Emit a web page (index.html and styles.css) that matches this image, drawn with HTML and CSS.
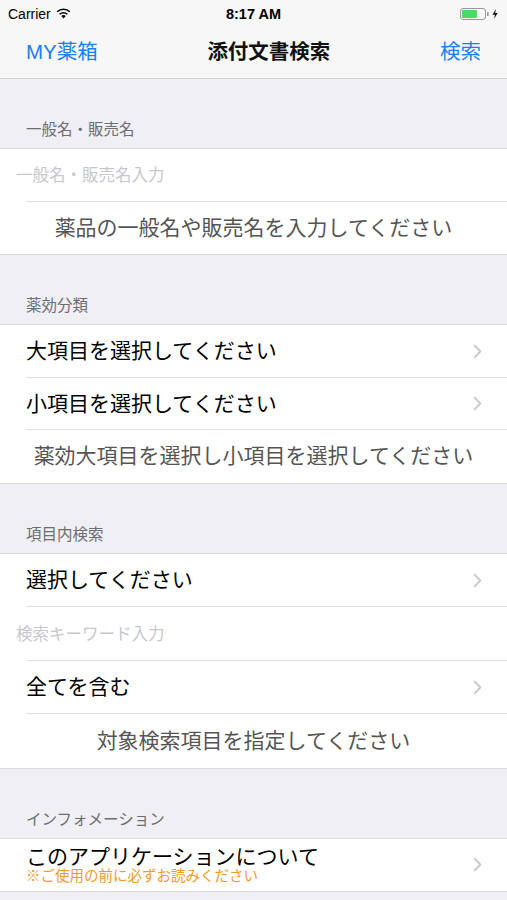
FILE: index.html
```html
<!DOCTYPE html>
<html lang="ja">
<head>
  <meta charset="UTF-8">
  <title>添付文書検索</title>
  <link rel="stylesheet" href="styles.css">
</head>
<body>

<div class="statusbar">
  <div class="status-left">
    <span>Carrier</span>
    <svg class="wifi" width="15" height="11" viewBox="0 0 15 11">
      <path d="M7.5 10.5 L5.3 8.1 A3.2 3.2 0 0 1 9.7 8.1 Z" fill="#000"/>
      <path d="M3.6 6.3 A5.6 5.6 0 0 1 11.4 6.3" stroke="#000" stroke-width="1.6" fill="none"/>
      <path d="M1.2 3.8 A9 9 0 0 1 13.8 3.8" stroke="#000" stroke-width="1.6" fill="none"/>
    </svg>
  </div>
  <div class="status-time">8:17 AM</div>
  <div class="status-right">
    <svg width="44" height="12" viewBox="0 0 44 12">
      <rect x="0.5" y="0.5" width="25" height="11" rx="2.5" fill="none" stroke="#999" stroke-width="1"/>
      <rect x="2" y="2" width="15" height="8" rx="1" fill="#4cd964"/>
      <rect x="27" y="4" width="1.6" height="4" fill="#999"/>
      <path d="M36 1 L32.5 6.8 L35 6.8 L34 11 L37.6 5 L35.1 5 Z" fill="#000"/>
    </svg>
  </div>
</div>

<div class="navbar">
  <span class="nav-btn">MY薬箱</span>
  <span class="nav-title">添付文書検索</span>
  <span class="nav-btn">検索</span>
</div>

<div class="section-header">一般名・販売名</div>
<div class="group">
  <div class="row input-row"><span class="placeholder">一般名・販売名入力</span></div>
  <div class="row note-row">薬品の一般名や販売名を入力してください</div>
</div>

<div class="section-header">薬効分類</div>
<div class="group">
  <div class="row link-row">
    <span>大項目を選択してください</span>
    <svg class="chevron" width="9" height="15" viewBox="0 0 9 15"><path d="M1.2 1.2 L7.4 7.5 L1.2 13.8" fill="none" stroke="#c7c7cc" stroke-width="1.8"/></svg>
  </div>
  <div class="row link-row">
    <span>小項目を選択してください</span>
    <svg class="chevron" width="9" height="15" viewBox="0 0 9 15"><path d="M1.2 1.2 L7.4 7.5 L1.2 13.8" fill="none" stroke="#c7c7cc" stroke-width="1.8"/></svg>
  </div>
  <div class="row note-row">薬効大項目を選択し小項目を選択してください</div>
</div>

<div class="section-header">項目内検索</div>
<div class="group tall">
  <div class="row link-row">
    <span>選択してください</span>
    <svg class="chevron" width="9" height="15" viewBox="0 0 9 15"><path d="M1.2 1.2 L7.4 7.5 L1.2 13.8" fill="none" stroke="#c7c7cc" stroke-width="1.8"/></svg>
  </div>
  <div class="row input-row"><span class="placeholder">検索キーワード入力</span></div>
  <div class="row link-row">
    <span>全てを含む</span>
    <svg class="chevron" width="9" height="15" viewBox="0 0 9 15"><path d="M1.2 1.2 L7.4 7.5 L1.2 13.8" fill="none" stroke="#c7c7cc" stroke-width="1.8"/></svg>
  </div>
  <div class="row note-row">対象検索項目を指定してください</div>
</div>

<div class="section-header">インフォメーション</div>
<div class="group">
  <div class="row link-row">
    <div class="two-line">
      <span class="title">このアプリケーションについて</span>
      <span class="subtitle">※ご使用の前に必ずお読みください</span>
    </div>
    <svg class="chevron" width="9" height="15" viewBox="0 0 9 15"><path d="M1.2 1.2 L7.4 7.5 L1.2 13.8" fill="none" stroke="#c7c7cc" stroke-width="1.8"/></svg>
  </div>
</div>

</body>
</html>
```

FILE: styles.css
```css
body {
  margin: 0;
  background: #efeff4;
  font-family: "Liberation Sans", "Noto Sans CJK JP", sans-serif;
  color: #000;
}

.statusbar {
  height: 27px;
  background: #f7f7f7;
  display: flex;
  align-items: center;
  justify-content: space-between;
  padding: 0 3px 0 8px;
  font-size: 14px;
  position: relative;
}
.status-left { display: flex; align-items: center; gap: 5px; }
.status-time {
  position: absolute;
  left: 0;
  right: 0;
  text-align: center;
  font-weight: bold;
  font-size: 14.5px;
}
.status-right { display: flex; align-items: center; padding-top: 1px; }

.navbar {
  height: 50px;
  background: #f7f7f7;
  border-bottom: 1px solid #d3d3d6;
  display: flex;
  align-items: center;
  justify-content: space-between;
  padding: 0 26px;
  font-size: 20.5px;
  line-height: 24px;
  padding-bottom: 1px;
}
.nav-btn { color: #1a7ef6; }
.nav-title { font-weight: bold; color: #111; }

.section-header {
  height: 69px;
  box-sizing: border-box;
  display: flex;
  align-items: flex-end;
  padding: 0 26px 8px;
  font-size: 15.5px;
  line-height: 20px;
  color: #6d6d72;
}

.group {
  background: #fff;
  border-top: 1px solid #dcdce0;
  border-bottom: 1px solid #dcdce0;
}

.row {
  height: 52.5px;
  display: flex;
  align-items: center;
  font-size: 21px;
  line-height: 26px;
  position: relative;
}
.group.tall .row { height: 53.5px; }
.row + .row::before {
  content: "";
  position: absolute;
  top: -1px;
  left: 26px;
  right: 0;
  border-top: 1px solid #e0e0e4;
}

.input-row { padding-left: 16px; }
.placeholder { font-size: 16.5px; color: #c7c7cd; }

.note-row {
  justify-content: center;
  color: #555;
}

.link-row {
  padding: 0 25px 0 26px;
  justify-content: space-between;
}

.chevron { flex-shrink: 0; }

.two-line { display: flex; flex-direction: column; padding-bottom: 2px; }
.two-line .title { font-size: 21px; line-height: 25px; }
.two-line .subtitle { font-size: 14.5px; line-height: 15px; color: #f39a2b; }
```
